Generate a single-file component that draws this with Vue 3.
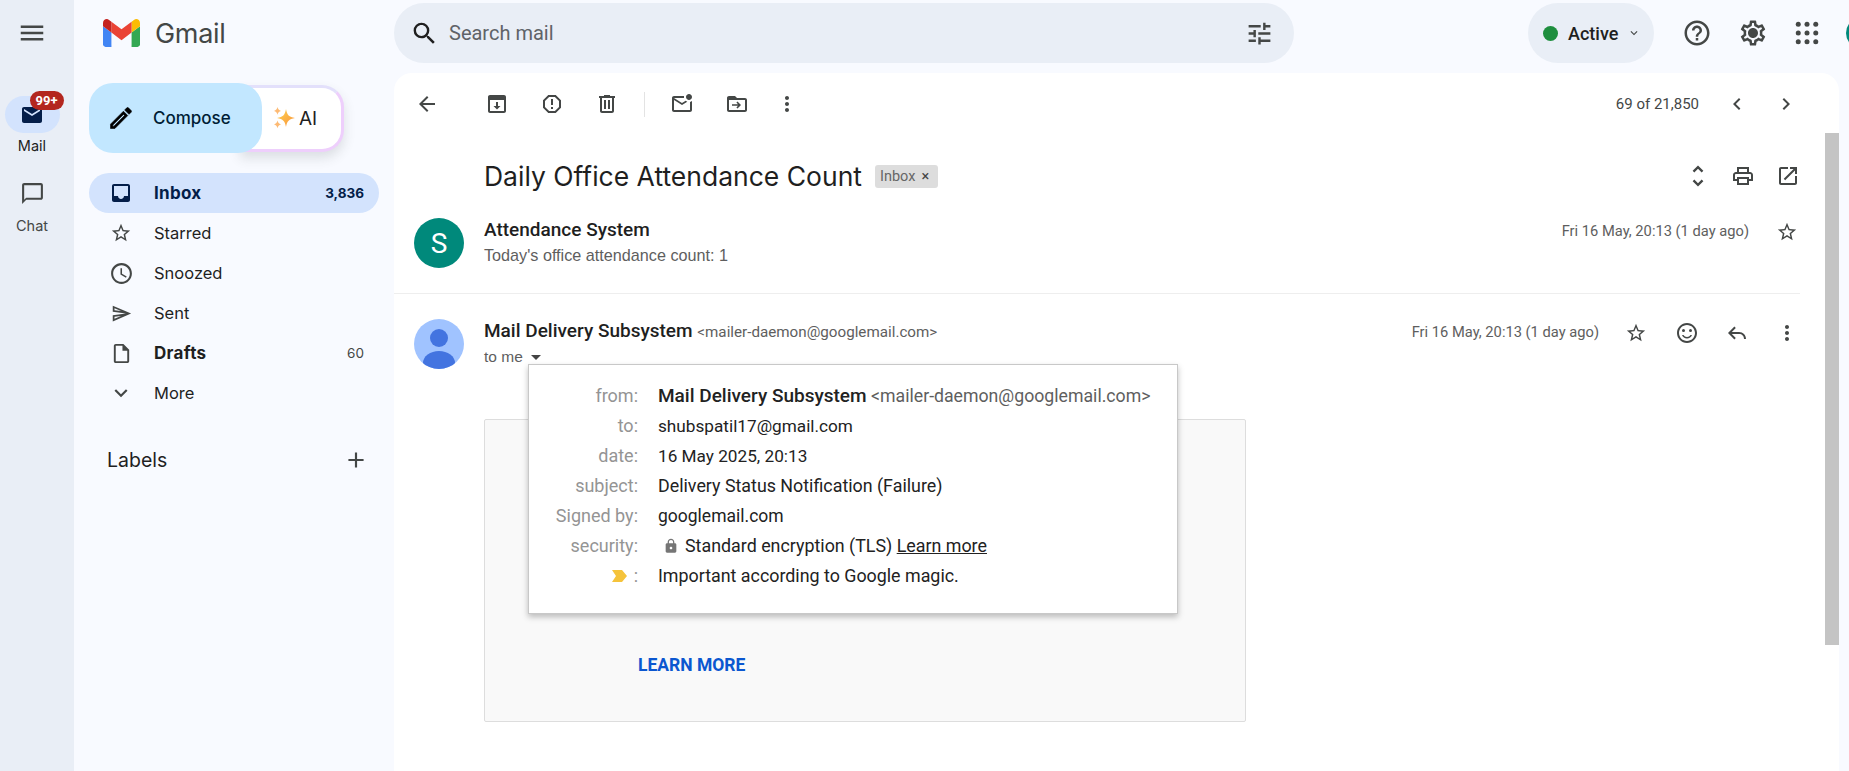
<script setup>
const icons = {
  menu: 'M3 18h18v-2H3v2zm0-5h18v-2H3v2zm0-7v2h18V6H3z',
  search: 'M15.5 14h-.79l-.28-.27A6.471 6.471 0 0 0 16 9.5 6.5 6.5 0 1 0 9.5 16c1.61 0 3.09-.59 4.23-1.57l.27.28v.79l5 4.99L20.49 19l-4.99-5zm-6 0C7.01 14 5 11.99 5 9.5S7.01 5 9.5 5 14 7.01 14 9.5 11.99 14 9.5 14z',
  tune: 'M3 17v2h6v-2H3zM3 5v2h10V5H3zm10 16v-2h8v-2h-8v-2h-2v6h2zM7 9v2H3v2h4v2h2V9H7zm14 4v-2H11v2h10zm-6-4h2V7h4V5h-4V3h-2v6z',
  help: 'M11 18h2v-2h-2v2zm1-16C6.48 2 2 6.48 2 12s4.48 10 10 10 10-4.48 10-10S17.52 2 12 2zm0 18c-4.41 0-8-3.59-8-8s3.59-8 8-8 8 3.59 8 8-3.59 8-8 8zm0-14c-2.21 0-4 1.79-4 4h2c0-1.1.9-2 2-2s2 .9 2 2c0 2-3 1.75-3 5h2c0-2.25 3-2.5 3-5 0-2.21-1.79-4-4-4z',
  gear: 'M19.43 12.98c.04-.32.07-.64.07-.98 0-.34-.03-.66-.07-.98l2.11-1.65c.19-.15.24-.42.12-.64l-2-3.46c-.09-.16-.26-.25-.44-.25-.06 0-.12.01-.17.03l-2.49 1c-.52-.4-1.08-.73-1.69-.98l-.38-2.65C14.46 2.18 14.25 2 14 2h-4c-.25 0-.46.18-.49.42l-.38 2.65c-.61.25-1.17.59-1.69.98l-2.49-1c-.06-.02-.12-.03-.18-.03-.17 0-.34.09-.43.25l-2 3.46c-.13.22-.07.49.12.64l2.11 1.65c-.04.32-.07.65-.07.98 0 .33.03.66.07.98l-2.11 1.65c-.19.15-.24.42-.12.64l2 3.46c.09.16.26.25.44.25.06 0 .12-.01.17-.03l2.49-1c.52.4 1.08.73 1.69.98l.38 2.65c.03.24.24.42.49.42h4c.25 0 .46-.18.49-.42l.38-2.65c.61-.25 1.17-.59 1.69-.98l2.49 1c.06.02.12.03.18.03.17 0 .34-.09.43-.25l2-3.46c.12-.22.07-.49-.12-.64l-2.11-1.65zm-1.98-1.71c.04.31.05.52.05.73 0 .21-.02.43-.05.73l-.14 1.13.89.7 1.08.84-.7 1.21-1.27-.51-1.04-.42-.9.68c-.43.32-.84.56-1.25.73l-1.06.43-.16 1.13-.2 1.35h-1.4l-.19-1.35-.16-1.13-1.06-.43c-.43-.18-.83-.41-1.23-.71l-.91-.7-1.06.43-1.27.51-.7-1.21 1.08-.84.89-.7-.14-1.13c-.03-.31-.05-.54-.05-.74s.02-.43.05-.73l.14-1.13-.89-.7-1.08-.84.7-1.21 1.27.51 1.04.42.9-.68c.43-.32.84-.56 1.25-.73l1.06-.43.16-1.13.2-1.35h1.39l.19 1.35.16 1.13 1.06.43c.43.18.83.41 1.23.71l.91.7 1.06-.43 1.27-.51.7 1.21-1.07.85-.89.7.14 1.13zM12 8c-2.21 0-4 1.79-4 4s1.79 4 4 4 4-1.79 4-4-1.79-4-4-4z',
  star: 'M22 9.24l-7.19-.62L12 2 9.19 8.63 2 9.24l5.46 4.73L5.82 21 12 17.27 18.18 21l-1.63-7.03L22 9.24zM12 15.4l-3.76 2.27 1-4.28-3.32-2.88 4.38-.38L12 6.1l1.71 4.04 4.38.38-3.32 2.88 1 4.28L12 15.4z',
  clock: 'M11.99 2C6.47 2 2 6.48 2 12s4.47 10 9.99 10C17.52 22 22 17.52 22 12S17.52 2 11.99 2zM12 20c-4.42 0-8-3.58-8-8s3.58-8 8-8 8 3.58 8 8-3.58 8-8 8zm.5-13H11v6l5.25 3.15.75-1.23-4.5-2.67z',
  sent: 'M4.01 6.03l7.51 3.22-7.52-1 .01-2.22m7.5 8.72L4 17.97v-2.22l7.51-1M2.01 3L2 10l15 2-15 2 .01 7L23 12 2.01 3z',
  draft: 'M14 2H6c-1.1 0-1.99.9-1.99 2L4 20c0 1.1.89 2 1.99 2H18c1.1 0 2-.9 2-2V8l-6-6zM6 20V4h7v5h5v11H6z',
  down: 'M16.59 8.59L12 13.17 7.41 8.59 6 10l6 6 6-6z',
  plus: 'M19 13h-6v6h-2v-6H5v-2h6V5h2v6h6v2z',
  inbox: 'M19 3H5c-1.1 0-2 .9-2 2v14c0 1.1.9 2 2 2h14c1.1 0 2-.9 2-2V5c0-1.1-.9-2-2-2zm0 12h-4c0 1.66-1.35 3-3 3s-3-1.34-3-3H5V5h14v10z',
  mail: 'M20 4H4c-1.1 0-1.99.9-1.99 2L2 18c0 1.1.9 2 2 2h16c1.1 0 2-.9 2-2V6c0-1.1-.9-2-2-2zm0 4l-8 5-8-5V6l8 5 8-5v2z',
  chat: 'M20 2H4c-1.1 0-2 .9-2 2v18l4-4h14c1.1 0 2-.9 2-2V4c0-1.1-.9-2-2-2zm0 14H6l-2 2V4h16v12z',
  back: 'M20 11H7.83l5.59-5.59L12 4l-8 8 8 8 1.41-1.41L7.83 13H20v-2z',
  archive: 'M19 3H5c-1.1 0-2 .9-2 2v14c0 1.1.9 2 2 2h14c1.1 0 2-.9 2-2V5c0-1.1-.9-2-2-2zm0 16H5V8h14v11zM13 10h-2v4H8.5l3.5 3.5 3.5-3.5H13z',
  spam: 'M15.73 3H8.27L3 8.27v7.46L8.27 21h7.46L21 15.73V8.27L15.73 3zM19 14.9L14.9 19H9.1L5 14.9V9.1L9.1 5h5.8L19 9.1v5.8zM11 7h2v6h-2zM11 15h2v2h-2z',
  trash: 'M15 4V3H9v1H4v2h1v13c0 1.1.9 2 2 2h10c1.1 0 2-.9 2-2V6h1V4h-5zm2 15H7V6h10v13zM9 8h2v9H9zm4 0h2v9h-2z',
  unread: 'M22 8.98V18c0 1.1-.9 2-2 2H4c-1.1 0-2-.9-2-2V6c0-1.1.9-2 2-2h10.1c-.06.32-.1.66-.1 1s.04.68.1 1H4l8 5 3.67-2.29c.47.43 1.02.76 1.63.98L12 13 4 8v10h16V9.9c.74-.15 1.42-.48 2-.92zM16 5c0 1.66 1.34 3 3 3s3-1.34 3-3-1.34-3-3-3-3 1.34-3 3z',
  move: 'M20 6h-8l-2-2H4c-1.1 0-2 .9-2 2v12c0 1.1.9 2 2 2h16c1.1 0 2-.9 2-2V8c0-1.1-.9-2-2-2zm0 12H4V8h16v10zM12.5 9.5l-1.1 1.1 1.6 1.6H7v1.6h6l-1.6 1.6 1.1 1.1 3.5-3.5z',
  more: 'M12 8c1.1 0 2-.9 2-2s-.9-2-2-2-2 .9-2 2 .9 2 2 2zm0 2c-1.1 0-2 .9-2 2s.9 2 2 2 2-.9 2-2-.9-2-2-2zm0 6c-1.1 0-2 .9-2 2s.9 2 2 2 2-.9 2-2-.9-2-2-2z',
  prev: 'M15.41 7.41L14 6l-6 6 6 6 1.41-1.41L10.83 12z',
  next: 'M10 6L8.59 7.41 13.17 12l-4.58 4.59L10 18l6-6z',
  unfold: 'M12 5.83L15.17 9l1.41-1.41L12 3 7.41 7.59 8.83 9 12 5.83zm0 12.34L8.83 15l-1.41 1.41L12 21l4.59-4.59L15.17 15 12 18.17z',
  print: 'M19 8h-1V3H6v5H5c-1.66 0-3 1.34-3 3v6h4v4h12v-4h4v-6c0-1.66-1.34-3-3-3zM8 5h8v3H8V5zm8 14H8v-4h8v4zm4-4h-2v-2H6v2H4v-4c0-.55.45-1 1-1h14c.55 0 1 .45 1 1v4z',
  open: 'M19 19H5V5h7V3H5c-1.11 0-2 .9-2 2v14c0 1.1.89 2 2 2h14c1.1 0 2-.9 2-2v-7h-2v7zM14 3v2h3.59l-9.83 9.83 1.41 1.41L19 6.41V10h2V3h-7z',
  smile: 'M12 2C6.48 2 2 6.48 2 12s4.48 10 10 10 10-4.48 10-10S17.52 2 12 2zm0 18c-4.41 0-8-3.59-8-8s3.59-8 8-8 8 3.59 8 8-3.59 8-8 8zM8.5 8A1.5 1.5 0 1 0 8.5 11 1.5 1.5 0 0 0 8.5 8zM15.5 8a1.5 1.5 0 1 0 0 3 1.5 1.5 0 0 0 0-3zM12 16c-1.5 0-2.8-.8-3.5-2H7c.8 2.2 2.7 3.6 5 3.6s4.2-1.4 5-3.6h-1.5c-.7 1.2-2 2-3.5 2z',
  reply: 'M9.4 5.6 3 12l6.4 6.4 1.4-1.4L6.8 13H14c3 0 5 2 5 5h2c0-4-3-7-7-7H6.8l4-4z',
  edit: 'M3 17.25V21h3.75L17.81 9.94l-3.75-3.75L3 17.25zM5.92 19H5v-.92l9.06-9.06.92.92L5.92 19zM20.71 5.63l-2.34-2.34c-.2-.2-.45-.29-.71-.29s-.51.1-.7.29l-1.83 1.83 3.75 3.75 1.83-1.83c.39-.39.39-1.02 0-1.41z',
  lock: 'M18 8h-1V6c0-2.76-2.24-5-5-5S7 3.24 7 6v2H6c-1.1 0-2 .9-2 2v10c0 1.1.9 2 2 2h12c1.1 0 2-.9 2-2V10c0-1.1-.9-2-2-2zm-6 9c-1.1 0-2-.9-2-2s.9-2 2-2 2 .9 2 2-.9 2-2 2zm3.1-9H8.9V6c0-1.71 1.39-3.1 3.1-3.1 1.71 0 3.1 1.39 3.1 3.1v2z'
}

const appDots = [5, 12, 19].flatMap((y) => [5, 12, 19].map((x) => ({ x, y })))

const nav = [
  { label: 'Inbox', icon: 'inbox', count: '3,836', active: true },
  { label: 'Starred', icon: 'star' },
  { label: 'Snoozed', icon: 'clock' },
  { label: 'Sent', icon: 'sent' },
  { label: 'Drafts', icon: 'draft', count: '60', bold: true },
  { label: 'More', icon: 'down' }
]

const toolbar = [
  { icon: 'archive', cls: 't1' },
  { icon: 'spam', cls: 't2' },
  { icon: 'trash', cls: 't3' }
]

const details = [
  { key: 'to:', value: 'shubspatil17@gmail.com', cls: 'narrow' },
  { key: 'date:', value: '16 May 2025, 20:13', cls: 'narrow' },
  { key: 'subject:', value: 'Delivery Status Notification (Failure)', cls: '' },
  { key: 'Signed by:', value: 'googlemail.com', cls: 'mid' }
]
</script>

<template>
  <div class="app">
    <aside class="rail">
      <svg class="ic menu" viewBox="0 0 24 24"><path :d="icons.menu" /></svg>
      <div class="rail-pill">
        <svg class="ic navy" viewBox="0 0 24 24"><path :d="icons.mail" /></svg>
        <span class="badge">99+</span>
      </div>
      <span class="rail-label dark">Mail</span>
      <svg class="ic chat" viewBox="0 0 24 24"><path :d="icons.chat" /></svg>
      <span class="rail-label chat-label">Chat</span>
    </aside>

    <nav class="side">
      <div class="brand">
        <svg class="gm" viewBox="52 42 88 66">
          <path fill="#4285f4" d="M58 108h14V74L52 59v43c0 3.32 2.69 6 6 6" />
          <path fill="#34a853" d="M120 108h14c3.32 0 6-2.69 6-6V59l-20 15" />
          <path fill="#fbbc04" d="M120 48v26l20-15v-8c0-7.42-8.47-11.65-14.4-7.2" />
          <path fill="#ea4335" d="M72 74V48l24 18 24-18v26L96 92" />
          <path fill="#c5221f" d="M52 51v8l20 15V48l-5.6-4.2c-5.94-4.45-14.4-.22-14.4 7.2" />
        </svg>
        <span class="gm-text">Gmail</span>
      </div>

      <div class="compose-wrap">
        <button class="compose">
          <svg class="ic black pencil" viewBox="0 0 24 24"><path :d="icons.edit" /></svg>
          <span>Compose</span>
        </button>
        <div class="ai">
          <svg class="spark" viewBox="0 0 24 24">
            <defs>
              <linearGradient id="sp" x1="0" y1="0" x2="1" y2="1">
                <stop offset="0" stop-color="#fcd34d" />
                <stop offset="1" stop-color="#fb923c" />
              </linearGradient>
            </defs>
            <path fill="url(#sp)" d="M14 3c1 6 3 8 9 9-6 1-8 3-9 9-1-6-3-8-9-9 6-1 8-3 9-9z" />
            <path fill="#fdba74" d="M5.500 1c.6 2.400 1.400 3.300 3.500 3.900-2.100.6-2.900 1.500-3.500 3.800C4.900 6.400 4.100 5.500 2 4.900 4.100 4.300 4.900 3.400 5.500 1zM5.500 14.500c.6 2.400 1.400 3.300 3.500 3.900-2.100.6-2.900 1.500-3.500 3.800-.6-2.300-1.400-3.200-3.500-3.800 2.100-.6 2.900-1.500 3.500-3.900z" />
          </svg>
          <span>AI</span>
        </div>
      </div>

      <ul class="nav">
        <li v-for="n in nav" :key="n.label" class="row" :class="{ active: n.active, bold: n.bold }">
          <span class="row-icon">
            <svg class="ic" :class="'i-' + n.icon" viewBox="0 0 24 24"><path :d="icons[n.icon]" /></svg>
          </span>
          <span class="row-label">{{ n.label }}</span>
          <span v-if="n.count" class="row-count">{{ n.count }}</span>
        </li>
      </ul>

      <div class="labels">
        <span>Labels</span>
        <svg class="ic plus" viewBox="0 0 24 24"><path :d="icons.plus" /></svg>
      </div>
    </nav>

    <div class="main">
      <header class="top">
        <div class="searchbar">
          <svg class="ic dark big" viewBox="0 0 24 24"><path :d="icons.search" /></svg>
          <span class="search-text">Search mail</span>
          <svg class="ic big" viewBox="0 0 24 24"><path :d="icons.tune" /></svg>
        </div>
        <div class="active-pill">
          <span class="dot"></span>
          <span class="active-text">Active</span>
          <svg class="mini" viewBox="0 0 24 24"><path :d="icons.down" /></svg>
        </div>
        <svg class="ic top-ic top-help" viewBox="0 0 24 24"><path :d="icons.help" /></svg>
        <svg class="ic top-ic top-gear" viewBox="0 0 24 24"><path :d="icons.gear" /></svg>
        <svg class="ic top-ic top-apps" viewBox="0 0 24 24">
          <circle v-for="d in appDots" :key="d.x + '-' + d.y" :cx="d.x" :cy="d.y" r="2" />
        </svg>
        <span class="me"></span>
      </header>

      <section class="panel">
        <div class="toolbar">
          <svg class="ic t0" viewBox="0 0 24 24"><path :d="icons.back" /></svg>
          <svg v-for="t in toolbar" :key="t.icon" class="ic" :class="t.cls" viewBox="0 0 24 24"><path :d="icons[t.icon]" /></svg>
          <span class="divider"></span>
          <svg class="ic t4" viewBox="0 0 24 24"><path :d="icons.unread" /></svg>
          <svg class="ic t5" viewBox="0 0 24 24"><path :d="icons.move" /></svg>
          <svg class="ic t6" viewBox="0 0 24 24"><path :d="icons.more" /></svg>
          <span class="pager">69 of 21,850</span>
          <svg class="ic" viewBox="0 0 24 24"><path :d="icons.prev" /></svg>
          <svg class="ic t7" viewBox="0 0 24 24"><path :d="icons.next" /></svg>
        </div>

        <div class="scrollarea">
          <div class="thread">
            <div class="subject-row">
              <h1 class="subject">Daily Office Attendance Count</h1>
              <span class="chip">Inbox<i class="x">×</i></span>
              <svg class="ic s1" viewBox="0 0 24 24"><path :d="icons.unfold" /></svg>
              <svg class="ic s2" viewBox="0 0 24 24"><path :d="icons.print" /></svg>
              <svg class="ic s2" viewBox="0 0 24 24"><path :d="icons.open" /></svg>
            </div>

            <article class="msg first">
              <div class="avatar green">S</div>
              <div class="who">
                <div class="name">Attendance System</div>
                <div class="snippet">Today's office attendance count: 1</div>
              </div>
              <span class="when">Fri 16 May, 20:13 (1 day ago)</span>
              <svg class="ic star1" viewBox="0 0 24 24"><path :d="icons.star" /></svg>
            </article>

            <article class="msg second">
              <div class="avatar blue">
                <svg viewBox="0 0 50 50">
                  <circle cx="25" cy="19" r="9" fill="#4374e0" />
                  <ellipse cx="25" cy="44" rx="16" ry="12" fill="#4374e0" />
                </svg>
              </div>
              <div class="who">
                <div class="name">Mail Delivery Subsystem <span class="addr">&lt;mailer-daemon@googlemail.com&gt;</span></div>
                <div class="tome">to me <i class="caret"></i></div>
              </div>
              <span class="when">Fri 16 May, 20:13 (1 day ago)</span>
              <svg class="ic star2" viewBox="0 0 24 24"><path :d="icons.star" /></svg>
              <svg class="ic a1" viewBox="0 0 24 24"><path :d="icons.smile" /></svg>
              <svg class="ic a2" viewBox="0 0 24 24"><path :d="icons.reply" /></svg>
              <svg class="ic a3" viewBox="0 0 24 24"><path :d="icons.more" /></svg>

              <div class="popup">
                <span class="k">from:</span>
                <span class="v"><b>Mail Delivery Subsystem</b> <span class="addr2">&lt;mailer-daemon@googlemail.com&gt;</span></span>
                <template v-for="d in details" :key="d.key">
                  <span class="k">{{ d.key }}</span>
                  <span class="v" :class="d.cls">{{ d.value }}</span>
                </template>
                <span class="k">security:</span>
                <span class="v sec">
                  <svg class="lock" viewBox="0 0 24 24"><path :d="icons.lock" /></svg>
                  <span>Standard encryption (TLS) <u>Learn more</u></span>
                </span>
                <span class="k">
                  <svg class="imp" viewBox="0 0 16 12"><path fill="#f5c33b" d="M0 0h10l5 6-5 6H0l4-6z" /></svg>:
                </span>
                <span class="v">Important according to Google magic.</span>
              </div>
            </article>

            <div class="mailbody">
              <a class="learn">LEARN MORE</a>
            </div>
          </div>
          <div class="scrollbar"><div class="thumb"></div></div>
        </div>
      </section>
    </div>
  </div>
</template>

<style>
html, body { margin: 0; overflow: hidden; }
</style>

<style scoped>
* { box-sizing: border-box; }
.app {
  display: flex; width: 1849px; height: 771px; overflow: hidden;
  background: #f8faff; color: #1f1f1f; font-family: Roboto, sans-serif;
}
.ic { width: 24px; height: 24px; flex: none; fill: #444746; display: block; }
.big { width: 29px; height: 29px; }
.navy { fill: #041e49; }
.dark { fill: #1f1f1f; }
.black { fill: #000; }

.rail {
  width: 74px; flex: none; background: #e9eef6;
  display: flex; flex-direction: column; align-items: center; padding: 18px 10px 0 0;
}
.menu { width: 30px; height: 30px; margin-bottom: 48px; }
.rail-pill {
  width: 55px; height: 37px; flex: none; border-radius: 19px; background: #d3e3fd; position: relative;
  display: flex; align-items: center; justify-content: center;
}
.badge {
  position: absolute; left: 25px; top: -5px; width: 34px; height: 19px; border-radius: 10px;
  background: #b3261e; color: #fff; font: 700 13px/19px Roboto, sans-serif; text-align: center;
}
.rail-label { font: 400 14.5px/18px Inter, sans-serif; color: #444746; margin-top: 4px; }
.rail-label.dark { color: #1f1f1f; margin-bottom: 26px; }
.chat { width: 25px; height: 25px; }
.chat-label { margin-top: 11px; }

.side { width: 320px; flex: none; display: flex; flex-direction: column; }
.brand { height: 66px; flex: none; display: flex; align-items: center; padding-left: 29px; }
.gm { width: 37px; height: 28px; display: block; }
.gm-text { font: 400 27px/1 Inter, sans-serif; color: #444746; margin-left: 15px; letter-spacing: -.3px; }
.compose-wrap { display: flex; margin: 17px 0 0 15px; height: 70px; flex: none; align-items: center; }
.compose {
  position: relative; z-index: 1; width: 173px; height: 70px; border: 0; border-radius: 24px;
  background: #c2e7ff; display: flex; align-items: center; padding: 0 0 0 18px; gap: 18px;
  font: 500 17px Inter, sans-serif; color: #001d35;
}
.pencil { width: 28px; height: 28px; stroke: #000; stroke-width: .5; }
.ai {
  width: 104px; height: 67px; margin-left: -22px; border-radius: 0 22px 22px 0;
  border: 3px solid; border-color: #e3e0fb #eecffc #eecffc #fff; border-left: 0;
  background: #fff; box-shadow: 0 6px 12px rgba(60,64,67,.15);
  display: flex; align-items: center; padding-left: 32px; gap: 3px;
  font: 400 19px Inter, sans-serif; color: #1f1f1f;
}
.spark { width: 24px; height: 24px; }
.nav { list-style: none; margin: 20px 0 0 15px; padding: 0; width: 290px; }
.row {
  height: 40px; border-radius: 20px; display: flex; align-items: center; padding: 0 15px 0 20px;
  font: 400 16.5px Inter, sans-serif; color: #1f1f1f;
}
.row-icon { width: 24px; height: 24px; display: flex; align-items: center; justify-content: center; flex: none; }
.i-star { width: 22px; height: 22px; }
.i-clock { width: 25px; height: 25px; }
.i-sent { width: 21px; height: 21px; }
.i-draft { width: 23px; height: 23px; }
.i-down { width: 26px; height: 26px; }
.row-label { margin-left: 21px; flex: 1; }
.row-count { font-size: 13.5px; color: #444746; }
.row.active { background: #d3e3fd; font-weight: 700; color: #041e49; }
.row.active .row-label, .row.bold .row-label { font-size: 17px; letter-spacing: .3px; font-weight: 700; }
.row.active .ic { fill: #041e49; }
.row.active .row-count { color: #041e49; }
.labels {
  display: flex; align-items: center; justify-content: space-between; height: 36px; flex: none;
  margin: 29px 0 0 33px; width: 262px; font: 400 19.5px Inter, sans-serif; color: #1f1f1f;
}
.plus { width: 26px; height: 26px; }

.main { flex: 1; min-width: 0; display: flex; flex-direction: column; }
.top { height: 73px; flex: none; display: flex; align-items: flex-start; padding-top: 3px; }
.searchbar {
  width: 900px; height: 60px; flex: none; border-radius: 30px; background: #e9eef6;
  display: flex; align-items: center; padding: 0 20px 0 16px;
}
.search-text { flex: 1; margin-left: 10px; font: 400 20px Roboto, sans-serif; color: #5f6368; }
.active-pill {
  width: 126px; height: 60px; flex: none; margin-left: 234px; border-radius: 30px; background: #e9eef6;
  display: flex; align-items: center; padding-left: 15px;
}
.dot { width: 15px; height: 15px; border-radius: 50%; background: #1e8e3e; }
.active-text { margin-left: 10px; font: 500 18px Roboto, sans-serif; color: #1f1f1f; }
.mini { width: 14px; height: 14px; fill: #444746; margin-left: 9px; }
.top-ic { width: 30px; height: 30px; margin-top: 15px; }
.top-help { margin-left: 28px; }
.top-gear { margin-left: 26px; }
.top-apps { margin-left: 24px; }
.me { width: 32px; height: 32px; flex: none; margin: 14px 0 0 24px; border-radius: 50%; background: #00897b; }

.panel {
  flex: 1; min-height: 0; width: 1445px; background: #fff; border-radius: 18px 18px 0 0;
  display: flex; flex-direction: column; overflow: hidden;
}
.toolbar { height: 60px; flex: none; display: flex; align-items: center; padding: 2px 41px 0 21px; }
.t1 { margin-left: 46px; }
.t2, .t3, .t5 { margin-left: 31px; }
.divider { width: 1px; height: 25px; background: #e3e3e3; margin: 0 25px; }
.t6 { margin-left: 26px; }
.t7 { margin-left: 25px; }
.pager { margin-left: auto; margin-right: 26px; font-size: 15px; color: #444746; }

.scrollarea { flex: 1; min-height: 0; display: flex; }
.thread { flex: 1; min-width: 0; }
.scrollbar { width: 14px; flex: none; }
.thumb { height: 512px; background: #c4c4c4; }

.subject-row { height: 63px; display: flex; align-items: center; padding: 23px 25px 0 90px; }
.subject { margin: 0; font: 400 26.5px/40px Inter, sans-serif; color: #1f1f1f; }
.chip {
  margin-left: 13px; height: 23px; width: 63px; border-radius: 3px; background: #ddd; color: #666;
  font-size: 14.5px; line-height: 23px; padding-left: 5px; flex: none;
}
.x { font-style: normal; margin-left: 6px; color: #444; }
.s1 { margin: 0 -2px 0 auto; width: 28px; height: 28px; }
.s2 { margin-left: 21px; }

.msg { position: relative; display: flex; margin-right: 25px; padding-left: 20px; }
.first { height: 98px; padding-top: 22px; border-bottom: 1px solid #eee; }
.second { height: 125px; padding-top: 25px; }
.avatar {
  width: 50px; height: 50px; border-radius: 50%; flex: none; overflow: hidden;
  display: flex; align-items: center; justify-content: center;
}
.avatar svg { width: 50px; height: 50px; display: block; }
.green { background: #00897b; color: #fff; font: 400 28px Roboto, sans-serif; }
.blue { background: #a0c3ff; }
.who { margin-left: 20px; flex: 1; min-width: 0; }
.name { font: 500 19px/24px Roboto, sans-serif; color: #1f1f1f; }
.snippet { font: 400 16.2px/20px "Liberation Sans", sans-serif; color: #5e5e5e; margin-top: 3px; }
.addr { font-weight: 400; font-size: 15.2px; color: #5e5e5e; }
.when { font-size: 14.7px; line-height: 20px; color: #5e5e5e; margin-top: 3px; height: 20px; }
.star1, .star2 { width: 22px; height: 22px; margin-top: 3px; }
.star1 { margin-left: 27px; margin-right: 2px; }
.star2 { margin-left: 26px; }
.a1, .a2, .a3 { margin-top: 2px; margin-left: 26px; }
.a1 { margin-left: 28px; }
.a3 { margin-right: 1px; }
.tome { font: 400 15.5px/20px "Liberation Sans", sans-serif; color: #5e5e5e; margin-top: 3px; }
.caret {
  display: inline-block; width: 0; height: 0; margin-left: 4px; vertical-align: middle;
  border: 5px solid transparent; border-top: 5px solid #444; border-bottom: 0;
}

.popup {
  position: absolute; z-index: 5; left: 134px; top: 70px; width: 650px; height: 250px;
  background: #fff; border: 1px solid #c8c8c8; box-shadow: 0 3px 6px rgba(0,0,0,.25);
  display: grid; grid-template-columns: 109px 1fr; column-gap: 20px; grid-auto-rows: 30px;
  padding-top: 16px; font-size: 17.85px; line-height: 30px;
}
.k { color: #949494; font-size: 18px; text-align: right; display: flex; justify-content: flex-end; align-items: center; }
.v { color: #222; white-space: nowrap; }
.v.narrow { font-size: 17.2px; }
.v.mid { font-size: 17.5px; }
.v b { font-weight: 500; font-size: 19px; }
.addr2 { color: #5e5e5e; font-size: 17.7px; }
.sec { display: flex; align-items: center; }
.sec u { color: #222; }
.lock { width: 16px; height: 16px; fill: #757575; margin: 0 6px 0 5px; }
.imp { width: 16px; height: 12px; margin-right: 6px; }

.mailbody {
  width: 762px; height: 303px; margin: 0 0 0 90px; background: #f9f9f9;
  border: 1px solid #ddd; border-radius: 2px; display: flex; align-items: flex-end;
  padding: 0 0 45px 153px;
}
.learn { font: 700 17.5px/22px Roboto, sans-serif; color: #0b57d0; }
</style>
